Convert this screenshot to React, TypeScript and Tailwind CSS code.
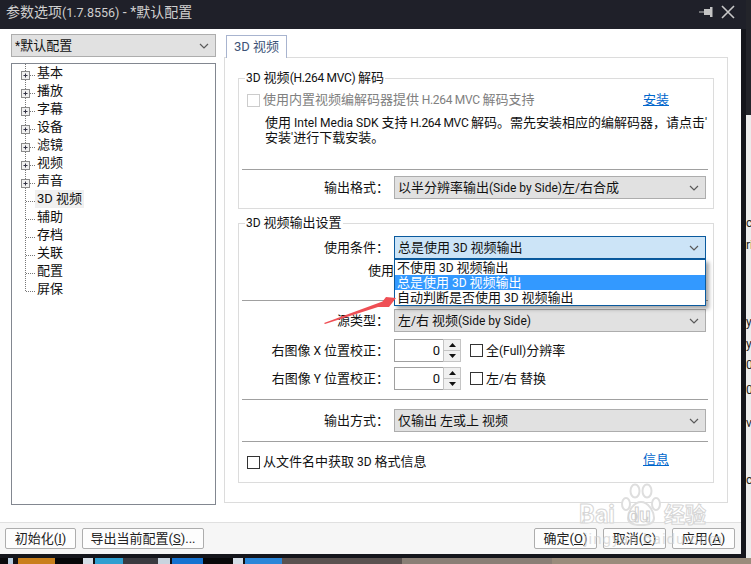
import React from "react";

const treeItems = [
  { label: "基本", plus: true },
  { label: "播放", plus: true },
  { label: "字幕", plus: true },
  { label: "设备", plus: true },
  { label: "滤镜", plus: true },
  { label: "视频", plus: true },
  { label: "声音", plus: true },
  { label: "3D 视频", selected: true },
  { label: "辅助" },
  { label: "存档" },
  { label: "关联" },
  { label: "配置" },
  { label: "屏保", last: true },
];

// stripes of the desktop that shows under the window
const desktopStripes = [
  ["w-[8px]", "bg-[#0a0a0c]"],
  ["w-[5px]", "bg-[#b9cde0]"],
  ["w-[5px]", "bg-[#101014]"],
  ["w-[37px]", "bg-[#c97f1c]"],
  ["w-[28px]", "bg-[#060608]"],
  ["w-[10px]", "bg-[#d5dde6]"],
  ["w-[2px]", "bg-[#101014]"],
  ["w-[28px]", "bg-[#2f9fd0]"],
  ["w-[35px]", "bg-[#3a3a40]"],
  ["w-[12px]", "bg-[#c9d4df]"],
  ["w-[2px]", "bg-[#101014]"],
  ["w-[31px]", "bg-[#1572d0]"],
  ["w-[30px]", "bg-[#08080a]"],
  ["w-[10px]", "bg-[#d5dde6]"],
  ["w-[2px]", "bg-[#101014]"],
  ["w-[37px]", "bg-[#2b86d8]"],
  ["w-[120px]", "bg-[#5b5250]"],
  ["w-[150px]", "bg-[#8a7f76]"],
  ["w-[219px]", "bg-[#9a8c7c]"],
];

// the latin runs in the reference are set smaller than the chinese around them
function Mixed({ text }: { text: string }) {
  return (
    <>
      {text.split(/([\x20-\x7e]+)/).map((run, i) =>
        i % 2 === 1 ? (
          <span key={i} className={run.includes("H.264") ? "text-[12px] tracking-[-0.3px]" : "text-[12px]"}>
            {run}
          </span>
        ) : (
          run
        ),
      )}
    </>
  );
}

function Chevron() {
  return (
    <svg width="10" height="6" viewBox="0 0 10 6" className="shrink-0">
      <path d="M1 1l4 4 4-4" fill="none" stroke="#5a5a5a" strokeWidth="1.2" />
    </svg>
  );
}

function TreeGlyph({ plus, last }: { plus?: boolean; last?: boolean }) {
  return (
    <svg width="23" height="18" viewBox="0 0 23 18" className="shrink-0">
      <path
        d={last ? "M13.5 0V11.5" : "M13.5 0V18"}
        stroke="#777"
        strokeDasharray="1 1"
        fill="none"
      />
      <path d="M14 11.5H23" stroke="#777" strokeDasharray="1 1" fill="none" />
      {plus ? (
        <>
          <rect x="9.5" y="7.5" width="8" height="8" fill="#f0f0f0" stroke="#8a8a8a" />
          <path d="M11.5 11.5h4M13.5 9.5v4" stroke="#334" fill="none" />
        </>
      ) : null}
    </svg>
  );
}

function Select({ value, focused, w = "w-[312px]" }: { value: string; focused?: boolean; w?: string }) {
  return (
    <div
      className={[
        "flex h-[23px] shrink-0 items-center justify-between border pl-[3px] pr-[6px]",
        w,
        focused ? "border-[#0a5a9e] bg-[#cce4f7]" : "border-[#adadad] bg-[#e1e1e1]",
      ].join(" ")}
    >
      <span className="whitespace-nowrap"><Mixed text={value} /></span>
      <Chevron />
    </div>
  );
}

function Check({ label, disabled }: { label: string; disabled?: boolean }) {
  return (
    <div className={["flex h-[18px] items-center gap-[3px] whitespace-nowrap", disabled ? "text-[#808080]" : ""].join(" ")}>
      <span className={["size-[13px] shrink-0 border bg-white", disabled ? "border-[#cccccc]" : "border-[#333333]"].join(" ")} />
      <span><Mixed text={label} /></span>
    </div>
  );
}

function Row({ label, children }: { label: string; children: React.ReactNode }) {
  return (
    <div className="flex items-center">
      <div className="w-[150px] shrink-0 whitespace-nowrap text-right"><Mixed text={label} /></div>
      <div className="ml-[5px] flex items-center">{children}</div>
    </div>
  );
}

function Spinner() {
  return (
    <div className="flex h-[23px] w-[67px] shrink-0">
      <div className="flex w-[49px] items-center justify-end border border-r-0 border-[#a0a0a0] bg-white pr-[3px]">0</div>
      <div className="flex w-[18px] flex-col gap-px border border-[#c4c4c4] bg-[#c4c4c4]">
        <div className="flex flex-1 items-center justify-center bg-[#f0f0f0]">
          <svg width="7" height="4" viewBox="0 0 7 4"><path d="M3.5 0L7 4H0z" fill="#111" /></svg>
        </div>
        <div className="flex flex-1 items-center justify-center bg-[#f0f0f0]">
          <svg width="7" height="4" viewBox="0 0 7 4"><path d="M0 0h7L3.5 4z" fill="#111" /></svg>
        </div>
      </div>
    </div>
  );
}

function Sep({ className = "" }: { className?: string }) {
  return <div className={["ml-[3px] h-px w-[466px] bg-[#a0a0a0]", className].join(" ")} />;
}

function Group({ title, children }: { title: string; children: React.ReactNode }) {
  return (
    <div className="relative w-[476px] border border-[#dcdcdc]">
      <span className="absolute -top-[10px] left-[6px] whitespace-nowrap bg-white px-[1px] leading-[18px]"><Mixed text={title} /></span>
      {children}
    </div>
  );
}

function FootBtn({ w, children }: { w: string; children: React.ReactNode }) {
  return (
    <button className={["h-[21px] shrink-0 rounded-[2px] border border-[#adadad] bg-[#fdfdfd] text-[13px] leading-[19px] text-[#222]", w].join(" ")}>
      {children}
    </button>
  );
}

export default function App() {
  return (
    <div className="relative flex h-[564px] w-[751px] flex-col overflow-hidden bg-[#15161c] font-['Roboto','Noto_Sans_CJK_SC',sans-serif] text-[13px] leading-[18px] text-[#111]">
      <div className="flex h-[558px]">
        <div className="flex w-[746px] flex-col">
          {/* title bar */}
          <div className="flex h-[29px] shrink-0 items-center justify-between bg-[#1f2029] pl-[6px] pr-[11px] text-[14px] text-[#cfcfcf]">
            <span className="-mt-[5px]">
              参数选项<span className="text-[12.5px]">(1.7.8556)</span> - *默认配置
            </span>
            <div className="-mt-[5px] flex items-center gap-[8px]">
              <svg width="14" height="10" viewBox="0 0 14 10">
                <path d="M0 4.5h5V2h6V0h2.5v10H11V8H5V5.5H0z" fill="#c4c4c4" />
              </svg>
              <svg width="14" height="14" viewBox="0 0 14 14">
                <path d="M1 1l12 12M13 1L1 13" stroke="#c8c8c8" strokeWidth="1.6" fill="none" />
              </svg>
            </div>
          </div>

          <div className="relative flex h-[529px] flex-col border-b-[4px] border-r-[5px] border-[#15161c] bg-white">
            <div className="flex h-[493px] pl-[11px] pt-[5px]">
              {/* left column */}
              <div className="flex w-[205px] shrink-0 flex-col gap-[6px]">
                <Select value="*默认配置" w="w-[205px]" />
                <div className="h-[442px] border border-[#828790] bg-white">
                  {treeItems.map((it) => (
                    <div key={it.label} className="flex h-[18px] items-center">
                      <TreeGlyph plus={it.plus} last={it.last} />
                      <span className={["h-[18px] px-[2px]", it.selected ? "bg-[#f0f0f0]" : ""].join(" ")}>{it.label}</span>
                    </div>
                  ))}
                </div>
              </div>

              {/* right column */}
              <div className="ml-[8px] mt-px w-[504px]">
                <div className="relative z-10 ml-[2px] flex h-[23px] w-[61px] items-center justify-center border border-b-0 border-[#a8b4cf] bg-white text-[#3d5378]">
                  3D 视频
                </div>
                <div className="-mt-px flex h-[446px] flex-col gap-[14px] border border-[#dcdcdc] pl-[13px] pt-[20px]">
                  <Group title="3D 视频(H.264 MVC) 解码">
                    <div className="h-[129px] pt-[12px]">
                      <div className="flex items-center justify-between pl-[8px] pr-[44px]">
                        <Check label="使用内置视频编解码器提供 H.264 MVC 解码支持" disabled />
                        <a className="text-[#0066cc] underline">安装</a>
                      </div>
                      <div className="mt-[6px] whitespace-nowrap pl-[26px] leading-[15px]">
                        <div className="h-[15px]"><Mixed text="使用 Intel Media SDK 支持 H.264 MVC 解码。需先安装相应的编解码器，请点击'" /></div>
                        <div className="h-[15px]"><Mixed text="安装'进行下载安装。" /></div>
                      </div>
                      <Sep className="mt-[24px]" />
                      <div className="mt-[6px]">
                        <Row label="输出格式：">
                          <Select value="以半分辨率输出(Side by Side)左/右合成" />
                        </Row>
                      </div>
                    </div>
                  </Group>

                  <Group title="3D 视频输出设置">
                    <div className="h-[258px] pt-[12px]">
                      <div className="relative z-20">
                        <Row label="使用条件：">
                          <div className="relative">
                            <Select value="总是使用 3D 视频输出" focused />
                            {/* open dropdown */}
                            <div className="absolute left-0 top-full h-[47px] w-[312px] border border-[#0a5a9e] bg-white leading-[15px] shadow-[3px_3px_4px_rgba(0,0,0,0.35)]">
                              <div className="h-[15px] pl-[2px]"><Mixed text="不使用 3D 视频输出" /></div>
                              <div className="h-[15px] bg-[#3399ff] pl-[2px] text-white"><Mixed text="总是使用 3D 视频输出" /></div>
                              <div className="h-[15px] pl-[2px]"><Mixed text="自动判断是否使用 3D 视频输出" /></div>
                            </div>
                          </div>
                        </Row>
                      </div>
                      <div className="h-[41px] w-[155px] pt-[3px] text-right">使用</div>
                      <Sep />
                      <div className="mt-[8px]">
                        <Row label="源类型：">
                          <Select value="左/右 视频(Side by Side)" />
                        </Row>
                      </div>
                      <div className="mt-[7px]">
                        <Row label="右图像 X 位置校正：">
                          <Spinner />
                          <div className="ml-[9px]"><Check label="全(Full)分辨率" /></div>
                        </Row>
                      </div>
                      <div className="mt-[5px]">
                        <Row label="右图像 Y 位置校正：">
                          <Spinner />
                          <div className="ml-[9px]"><Check label="左/右 替换" /></div>
                        </Row>
                      </div>
                      <Sep className="mt-[9px]" />
                      <div className="mt-[9px]">
                        <Row label="输出方式：">
                          <Select value="仅输出 左或上 视频" />
                        </Row>
                      </div>
                      <Sep className="mt-[9px]" />
                      <div className="mt-[11px] flex items-center justify-between pl-[8px] pr-[44px]">
                        <Check label="从文件名中获取 3D 格式信息" />
                        <a className="-mt-[4px] text-[#0066cc] underline">信息</a>
                      </div>
                    </div>
                  </Group>
                </div>
              </div>
            </div>

            {/* footer */}
            <div className="flex h-[32px] items-start border-t border-[#e0e0e0] bg-[#f6f6f6] pl-[5px] pr-[6px] pt-[5px]">
              <FootBtn w="w-[71px]">初始化(<u>I</u>)</FootBtn>
              <div className="ml-[6px]">
                <FootBtn w="w-[122px]">导出当前配置(<u>S</u>)...</FootBtn>
              </div>
              <div className="ml-auto flex gap-[6px]">
                <FootBtn w="w-[63px]">确定(<u>O</u>)</FootBtn>
                <FootBtn w="w-[63px]">取消(<u>C</u>)</FootBtn>
                <FootBtn w="w-[63px]">应用(<u>A</u>)</FootBtn>
              </div>
            </div>

            {/* baidu watermark */}
            <div className="pointer-events-none absolute left-[579px] top-[453px] h-[72px] w-[130px]">
              <svg width="42" height="44" viewBox="0 0 42 44" className="absolute left-[41px] top-0" fill="#fff" stroke="#dedede" strokeWidth="2">
                <ellipse cx="6" cy="22" rx="4" ry="6" />
                <ellipse cx="15" cy="9" rx="4.5" ry="6.5" />
                <ellipse cx="27" cy="9" rx="4.5" ry="6.5" />
                <ellipse cx="36" cy="22" rx="4" ry="6" />
                <path d="M21 20c7 0 13 9 13 16 0 5-5 7-13 7s-13-2-13-7c0-7 6-16 13-16z" />
              </svg>
              <span className="absolute left-0 top-[20px] text-[25px] font-bold leading-[26px] text-white [-webkit-text-stroke:1px_#d6d6d6]">Bai</span>
              <span className="absolute left-[49px] top-[22px] text-[20px] font-bold leading-[22px] text-white [-webkit-text-stroke:1px_#cfcfcf]">du</span>
              <span className="absolute left-[85px] top-[22px] text-[21px] font-bold leading-[22px] text-white [-webkit-text-stroke:1px_#d6d6d6]">经验</span>
              <span className="absolute left-[5px] top-[48px] whitespace-nowrap text-[15px] leading-[18px] tracking-[1px] text-[#cfcfcf]/70">jingyan.baidu.com</span>
            </div>
          </div>
        </div>

        {/* desktop edge on the right */}
        <div className="flex w-[5px] flex-col overflow-hidden text-[12px] leading-[18px]">
          <div className="h-[115px] shrink-0 bg-[#23242a]" />
          <div className="h-[443px] shrink-0 bg-[#ececec] pt-[99px] text-[#222]">
            <div>c</div>
            <div className="mt-[4px]">ri</div>
            <div className="mt-[59px]">y</div>
            <div className="mt-[4px]">y</div>
            <div className="mt-[3px]">0</div>
            <div className="mt-[7px]">0</div>
            <div className="mt-[15px]">v</div>
            <div className="mt-[39px]">c</div>
          </div>
        </div>
      </div>

      {/* desktop under the window */}
      <div className="flex h-[6px] shrink-0">
        {desktopStripes.map(([w, bg], i) => (
          <div key={i} className={["shrink-0", w, bg].join(" ")} />
        ))}
      </div>

      {/* red annotation arrow */}
      <svg width="80" height="32" viewBox="0 0 80 32" className="pointer-events-none absolute left-[322px] top-[295px] z-30">
        <path d="M2 28L60.5 6.5 64 2 74 3 67 12 56 12 3 29z" fill="#ef4f55" />
      </svg>
    </div>
  );
}
